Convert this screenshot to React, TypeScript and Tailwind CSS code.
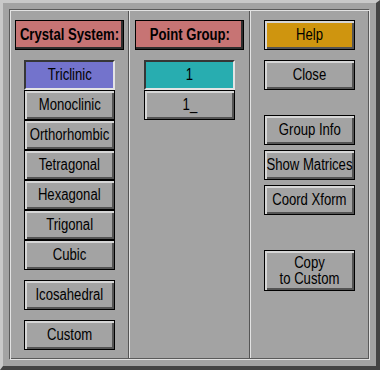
import React from 'react';

const font = "font-['Liberation_Sans',Arial,sans-serif]";

// the original uses a tall narrow bitmap helvetica, so squeeze the glyphs horizontally
const Txt: React.FC<{ children: React.ReactNode; bold?: boolean }> = ({ children, bold }) => (
  <span
    className={`inline-block whitespace-nowrap scale-x-[0.82] text-[16px] leading-[16px] text-black ${
      bold ? 'font-bold' : 'font-normal'
    }`}
  >
    {children}
  </span>
);

type BtnProps = {
  label: React.ReactNode;
  tone?: 'plain' | 'help';
  className?: string;
};

// raised motif-style push button
const Btn: React.FC<BtnProps> = ({ label, tone = 'plain', className = '' }) => (
  <div
    className={`w-[91px] h-[30px] flex items-center justify-center text-center border border-black shadow-[inset_2px_2px_0_#d6d6d6,inset_-2px_-2px_0_#545454] ${
      tone === 'help' ? 'bg-[#cf950f]' : 'bg-[#a3a3a3]'
    } ${className}`}
  >
    <Txt>{label}</Txt>
  </div>
);

// pressed / selected toggle
const Picked: React.FC<{ label: string; color: string }> = ({ label, color }) => (
  <div
    className={`w-[91px] h-[30px] flex items-center justify-center border-2 border-t-[#363636] border-l-[#363636] border-r-[#e4e4e4] border-b-[#e4e4e4] ${color}`}
  >
    <Txt>{label}</Txt>
  </div>
);

const Header: React.FC<{ label: string }> = ({ label }) => (
  <div className="w-[109px] h-[30px] flex items-center justify-center bg-[#c77474] border border-black shadow-[inset_-2px_-2px_0_#2e2e2e]">
    <Txt bold>{label}</Txt>
  </div>
);

const Sep = () => (
  <div className="w-[2px] h-full flex">
    <div className="w-px bg-[#555555]" />
    <div className="w-px bg-[#e2e2e2]" />
  </div>
);

export default function App() {
  const systems = ['Triclinic', 'Monoclinic', 'Orthorhombic', 'Tetragonal', 'Hexagonal', 'Trigonal', 'Cubic'];

  return (
    <div
      className={`w-[380px] h-[370px] bg-[#a3a3a3] ${font} border-t-[3px] border-l-[3px] border-r-[4px] border-b-[4px] border-t-[#c9c9c9] border-l-[#c9c9c9] border-r-[#444444] border-b-[#444444] p-[6px]`}
    >
      <div className="h-full flex border border-t-[#5a5a5a] border-l-[#5a5a5a] border-r-[#e2e2e2] border-b-[#e2e2e2] shadow-[inset_1px_1px_0_#e2e2e2,inset_-1px_-1px_0_#5a5a5a] p-px">
        {/* crystal system */}
        <div className="w-[117px] flex flex-col items-center pt-[9px]">
          <Header label="Crystal System:" />
          <div className="mt-[10px] flex flex-col">
            {systems.map((s, i) =>
              i === 0 ? <Picked key={s} label={s} color="bg-[#7373cc]" /> : <Btn key={s} label={s} />
            )}
          </div>
          <Btn label="Icosahedral" className="mt-[10px]" />
          <Btn label="Custom" className="mt-[10px]" />
        </div>

        <Sep />

        {/* point group */}
        <div className="w-[119px] flex flex-col items-center pt-[9px]">
          <Header label="Point Group:" />
          <div className="mt-[10px] flex flex-col">
            <Picked label="1" color="bg-[#28adb0]" />
            <Btn label="1_" />
          </div>
        </div>

        <Sep />

        {/* actions */}
        <div className="flex-1 flex flex-col items-center pt-[9px]">
          <Btn label="Help" tone="help" />
          <Btn label="Close" className="mt-[10px]" />
          <Btn label="Group Info" className="mt-[25px]" />
          <Btn label="Show Matrices" className="mt-[5px]" />
          <Btn label="Coord Xform" className="mt-[5px]" />
          <Btn
            label={
              <>
                Copy
                <br />
                to Custom
              </>
            }
            className="mt-[35px] h-[41px]"
          />
        </div>
      </div>
    </div>
  );
}
